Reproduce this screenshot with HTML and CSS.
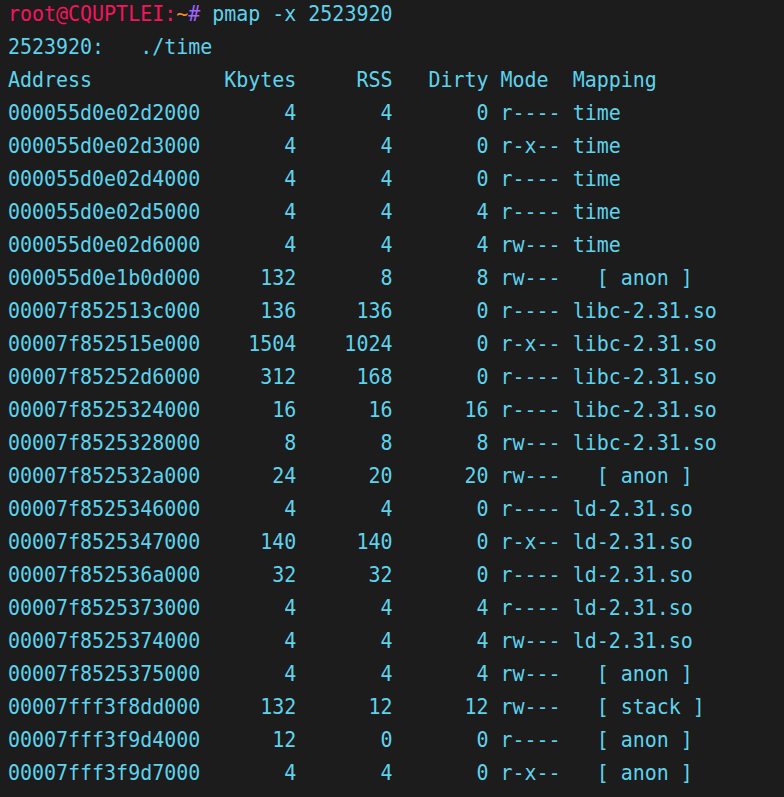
FILE: index.html
```html
<!DOCTYPE html>
<html>
<head>
    <title>pmap -x</title>
    <meta charset="UTF-8">
    <link rel="stylesheet" href="styles.css">
</head>
<body>
    <div class="terminal">
<pre class="output"><span class="user">root@CQUPTLEI:</span><span class="path">~</span><span class="prompt">#</span> pmap -x 2523920
2523920:   ./time
Address           Kbytes     RSS   Dirty Mode  Mapping
000055d0e02d2000       4       4       0 r---- time
000055d0e02d3000       4       4       0 r-x-- time
000055d0e02d4000       4       4       0 r---- time
000055d0e02d5000       4       4       4 r---- time
000055d0e02d6000       4       4       4 rw--- time
000055d0e1b0d000     132       8       8 rw---   [ anon ]
00007f852513c000     136     136       0 r---- libc-2.31.so
00007f852515e000    1504    1024       0 r-x-- libc-2.31.so
00007f85252d6000     312     168       0 r---- libc-2.31.so
00007f8525324000      16      16      16 r---- libc-2.31.so
00007f8525328000       8       8       8 rw--- libc-2.31.so
00007f852532a000      24      20      20 rw---   [ anon ]
00007f8525346000       4       4       0 r---- ld-2.31.so
00007f8525347000     140     140       0 r-x-- ld-2.31.so
00007f852536a000      32      32       0 r---- ld-2.31.so
00007f8525373000       4       4       4 r---- ld-2.31.so
00007f8525374000       4       4       4 rw--- ld-2.31.so
00007f8525375000       4       4       4 rw---   [ anon ]
00007fff3f8dd000     132      12      12 rw---   [ stack ]
00007fff3f9d4000      12       0       0 r----   [ anon ]
00007fff3f9d7000       4       4       0 r-x--   [ anon ]</pre>
    </div>
</body>
</html>
```

FILE: styles.css
```css
html, body {
    margin: 0;
    height: 100%;
    background-color: #1c1c1c;
    overflow: hidden;
}
.terminal {
    padding-left: 8px;
}
.output {
    margin: -3px 0 0 0;
    font-family: "DejaVu Sans Mono", monospace;
    font-size: 22px;
    line-height: 33px;
    color: #5fd3ec;
    transform: scaleX(0.907);
    transform-origin: 0 0;
}
.user {
    color: #f5145d;
}
.path {
    color: #f58a1f;
}
.prompt {
    color: #a065ff;
}
```
